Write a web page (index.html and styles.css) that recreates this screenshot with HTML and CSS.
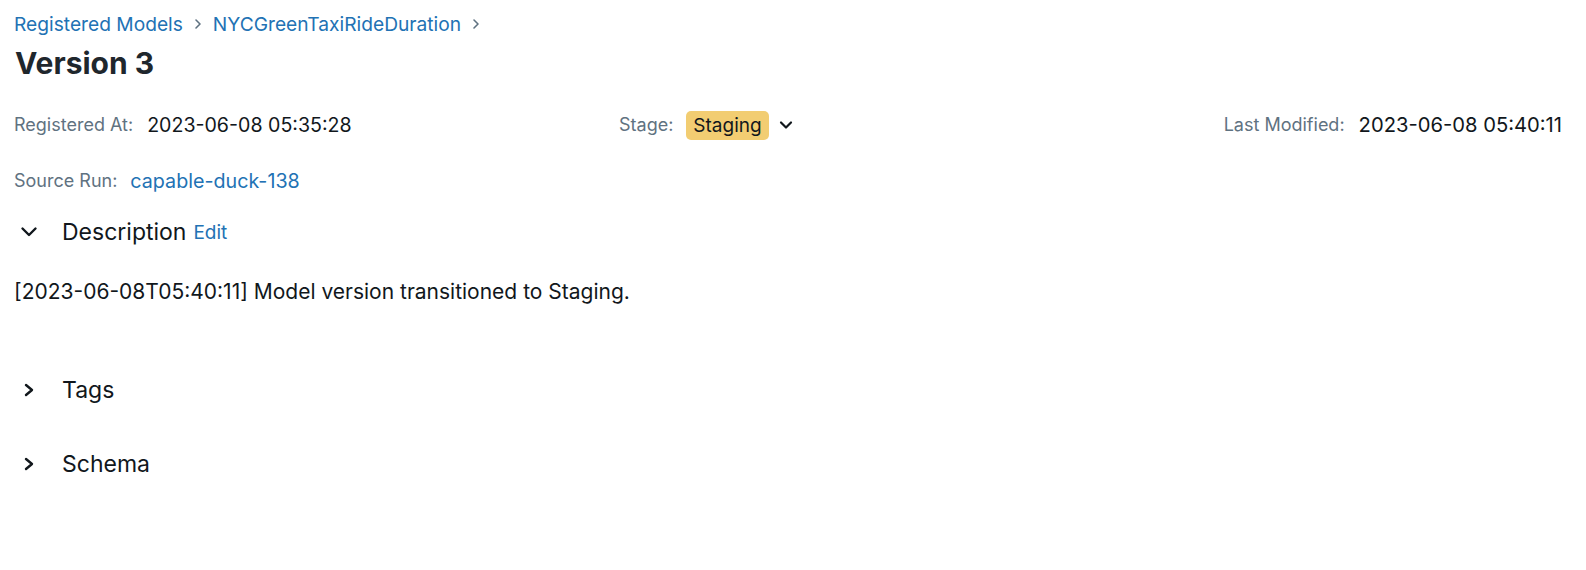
FILE: index.html
```html
<!DOCTYPE html>
<html>
<head>
<meta charset="utf-8">
<link rel="stylesheet" href="styles.css">
</head>
<body>
<div class="page">
  <nav class="breadcrumb">
    <a class="crumb">Registered Models</a>
    <svg class="crumb-sep" width="8" height="12" viewBox="0 0 8 12"><path d="M2 2 L6 6 L2 10" fill="none" stroke="#5f7281" stroke-width="1.6" stroke-linecap="round" stroke-linejoin="round"/></svg>
    <a class="crumb">NYCGreenTaxiRideDuration</a>
    <svg class="crumb-sep" width="8" height="12" viewBox="0 0 8 12"><path d="M2 2 L6 6 L2 10" fill="none" stroke="#5f7281" stroke-width="1.6" stroke-linecap="round" stroke-linejoin="round"/></svg>
  </nav>
  <h1 class="title">Version 3</h1>

  <div class="meta-row">
    <div class="meta meta-left"><span class="label">Registered At:</span><span class="value">2023-06-08 05:35:28</span></div>
    <div class="meta meta-mid"><span class="label">Stage:</span><span class="badge">Staging</span>
      <svg class="stage-caret" width="14" height="10" viewBox="0 0 14 10"><path d="M2 2.5 L7 7.5 L12 2.5" fill="none" stroke="#11171c" stroke-width="2.2" stroke-linecap="round" stroke-linejoin="round"/></svg>
    </div>
    <div class="meta meta-right"><span class="label">Last Modified:</span><span class="value">2023-06-08 05:40:11</span></div>
  </div>

  <div class="meta source-row"><span class="label">Source Run:</span><a class="link">capable-duck-138</a></div>

  <div class="section-head desc-head">
    <span class="toggle"><svg width="18" height="12" viewBox="0 0 18 12"><path d="M2.5 2.5 L9 9 L15.5 2.5" fill="none" stroke="#11171c" stroke-width="2.4" stroke-linecap="round" stroke-linejoin="round"/></svg></span>
    <span class="section-title">Description</span><a class="edit">Edit</a>
  </div>
  <p class="desc-text">[2023-06-08T05:40:11] Model version transitioned to Staging.</p>

  <div class="section-head tags-head">
    <span class="toggle"><svg width="12" height="14" viewBox="0 0 12 14"><path d="M3 2 L9 7 L3 12" fill="none" stroke="#11171c" stroke-width="2.4" stroke-linecap="round" stroke-linejoin="round"/></svg></span>
    <span class="section-title">Tags</span>
  </div>
  <div class="section-head schema-head">
    <span class="toggle"><svg width="12" height="14" viewBox="0 0 12 14"><path d="M3 2 L9 7 L3 12" fill="none" stroke="#11171c" stroke-width="2.4" stroke-linecap="round" stroke-linejoin="round"/></svg></span>
    <span class="section-title">Schema</span>
  </div>
</div>
</body>
</html>
```

FILE: styles.css
```css
* { box-sizing: border-box; }
html, body { margin: 0; padding: 0; background: #fff; }
body {
  font-family: Inter, "Noto Sans", "Liberation Sans", sans-serif;
  color: #11171c;
}
.page { padding: 0 24px 0 14px; }

.breadcrumb {
  display: flex;
  align-items: center;
  padding-top: 12px;
  height: 36px;
  line-height: 24px;
  font-size: 19.2px;
}
.crumb { color: #2272b4; text-decoration: none; }
.crumb-sep { margin: 0 11px 0 11px; }

.title {
  margin: 7px 0 0 1px;
  font-size: 30px;
  line-height: 40px;
  font-weight: 700;
  color: #1f272d;
}

.meta { display: flex; align-items: center; line-height: 30px; }
.label { color: #5f7281; font-size: 18px; margin-right: 14px; }
.value { color: #11171c; font-size: 19.6px; }

.meta-row {
  display: grid;
  grid-template-columns: 605px auto 1fr;
  align-items: center;
  margin-top: 27px;
  height: 30px;
}
.meta-right { justify-content: flex-end; }
.meta-right .value { font-size: 20.2px; }
.meta-mid .label { margin-right: 13px; }
.badge {
  background: #f2cd72;
  border-radius: 5px;
  height: 29px;
  line-height: 29px;
  padding: 0 7px;
  font-size: 19px;
  color: #11171c;
}
.stage-caret { margin-left: 10px; }

.source-row { margin-top: 26px; }
.source-row .label { margin-right: 13px; }
.link { color: #2272b4; font-size: 19.7px; }

.section-head { display: flex; align-items: center; height: 32px; }
.toggle { width: 30px; display: flex; justify-content: center; margin-right: 18px; }
.section-title { font-size: 23px; color: #11171c; }
.edit { color: #2272b4; font-size: 19px; margin-left: 7px; }
.desc-head { margin-top: 20px; }

.desc-text {
  margin: 29px 0 0 0;
  line-height: 30px;
  font-size: 21px;
  color: #11171c;
}
.tags-head { margin-top: 67px; }
.schema-head { margin-top: 42px; }
```
